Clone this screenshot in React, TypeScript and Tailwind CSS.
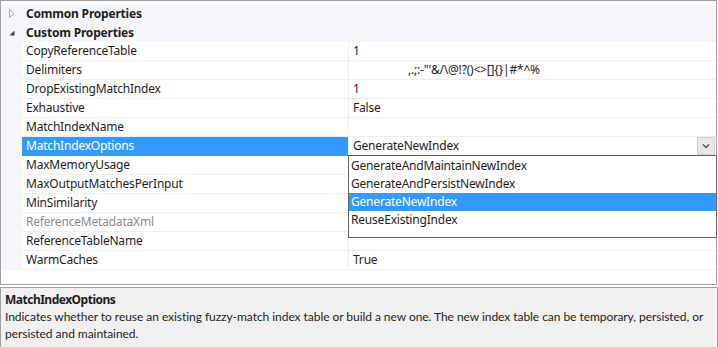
import React from "react";

const rows: { name: string; value: string; gray?: boolean; selected?: boolean; indent?: boolean }[] = [
  { name: "CopyReferenceTable", value: "1" },
  { name: "Delimiters", value: ",.;:-\"'&/\\@!?()<>[]{}|#*^%", indent: true },
  { name: "DropExistingMatchIndex", value: "1" },
  { name: "Exhaustive", value: "False" },
  { name: "MatchIndexName", value: "" },
  { name: "MatchIndexOptions", value: "GenerateNewIndex", selected: true },
  { name: "MaxMemoryUsage", value: "" },
  { name: "MaxOutputMatchesPerInput", value: "" },
  { name: "MinSimilarity", value: "" },
  { name: "ReferenceMetadataXml", value: "", gray: true },
  { name: "ReferenceTableName", value: "" },
  { name: "WarmCaches", value: "True" },
];

const options = [
  "GenerateAndMaintainNewIndex",
  "GenerateAndPersistNewIndex",
  "GenerateNewIndex",
  "ReuseExistingIndex",
];

export default function App() {
  return (
    <div
      className="w-[718px] h-[347px] bg-white text-[12px] text-[#1e1e1e] overflow-hidden flex flex-col tracking-[-0.2px]"
      style={{ fontFamily: '"Noto Sans", "Open Sans", sans-serif' }}
    >
      <div className="relative h-[285px] border border-[#a0a0a0] mr-[1px] flex flex-col pt-[3px] bg-white">
        <div className="flex h-[19px] bg-[#f4f6f9] items-center">
          <div className="w-[21px] flex justify-center items-center">
            <svg width="8" height="9" viewBox="0 0 8 9">
              <path d="M1.5 0.5 L6 4.5 L1.5 8.5 Z" fill="none" stroke="#a8a8a8" />
            </svg>
          </div>
          <div className="pl-[4px] font-bold leading-none">Common Properties</div>
        </div>
        <div className="flex h-[19px] bg-[#f4f6f9] items-center">
          <div className="w-[21px] flex justify-center items-center">
            <svg width="8" height="8" viewBox="0 0 8 8">
              <path d="M6.5 1.5 L6.5 6.5 L1.5 6.5 Z" fill="#404040" />
            </svg>
          </div>
          <div className="pl-[4px] font-bold leading-none">Custom Properties</div>
        </div>
        {rows.map((r) => (
          <div key={r.name} className="flex h-[19px]">
            <div className="w-[21px] bg-[#f4f6f9]" />
            <div
              className={
                "w-[326px] flex items-center pl-[4px] border-b " +
                (r.selected ? "bg-[#3399ff] text-white border-[#3399ff]" : "border-[#eeeeee] ") +
                (r.gray ? " text-[#8a8a8a]" : "")
              }
            >
              {r.name}
            </div>
            <div className="w-[1px] bg-[#eeeeee]" />
            <div
              className={
                "flex-1 flex items-center border-b border-[#eeeeee] " +
                (r.indent ? "pl-[59px]" : "pl-[4px]")
              }
            >
              {r.value}
              {r.selected && (
                <div className="ml-auto mr-[1px] w-[18px] h-[18px] bg-[#e8e8e8] border border-[#cfcfcf] flex items-center justify-center">
                  <svg width="8" height="6" viewBox="0 0 8 6">
                    <path d="M1 1.5 L4 4.5 L7 1.5" fill="none" stroke="#505050" strokeWidth="1.4" />
                  </svg>
                </div>
              )}
            </div>
          </div>
        ))}
        <div className="absolute left-[347px] top-[154px] w-[369px] h-[83px] bg-white border border-[#646464] flex flex-col pt-[1px]">
          {options.map((o) => (
            <div
              key={o}
              className={
                "h-[18px] flex items-center pl-[2px] " +
                (o === "GenerateNewIndex" ? "bg-[#3399ff] text-white" : "")
              }
            >
              {o}
            </div>
          ))}
        </div>
      </div>
      <div className="mt-[2px] flex-1 bg-[#f0f0f0] border border-[#a0a0a0] border-b-0 pl-[4px] pt-[3px] leading-[17px]">
        <div className="font-bold tracking-[-0.5px]">MatchIndexOptions</div>
        <div
          className="pr-[2px] tracking-[-0.05px]"
          style={{ fontFamily: 'Lato, "Noto Sans", sans-serif' }}
        >
          Indicates whether to reuse an existing fuzzy-match index table or build a new one. The new index table can be temporary, persisted, or persisted and maintained.
        </div>
      </div>
    </div>
  );
}
